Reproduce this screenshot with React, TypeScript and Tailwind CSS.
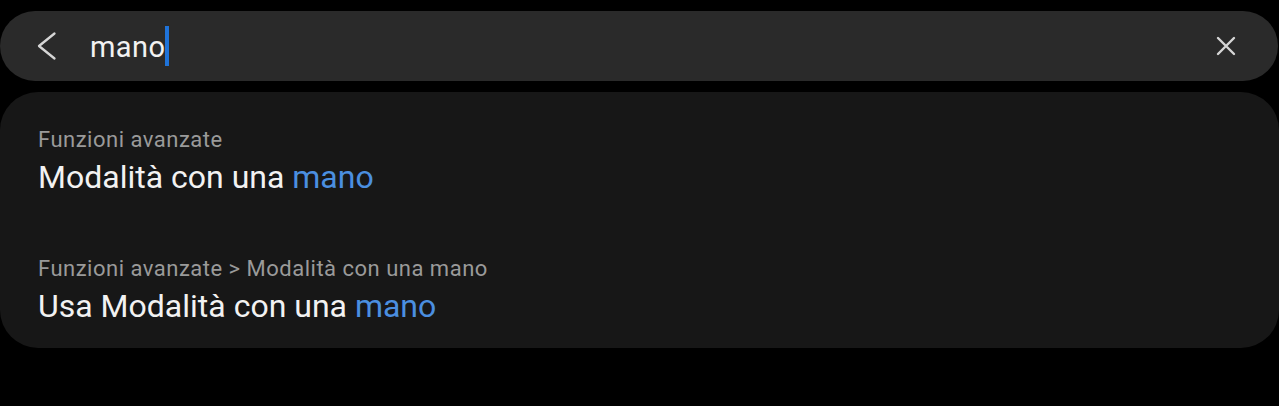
import React from "react";

export default function App() {
  return (
    <div
      className="w-[1279px] h-[406px] bg-black overflow-hidden"
      style={{ fontFamily: "Roboto, 'Noto Sans', sans-serif" }}
    >
      <div className="pt-[11px]">
        <div className="h-[70px] w-[1278px] rounded-full bg-[#2a2a2a] flex items-center">
          <div className="w-[90px] flex items-center pl-[37px]">
            <svg width="20" height="30" viewBox="0 0 20 30" fill="none">
              <path d="M17.5 2.5 L2 15 L17.5 27.5" stroke="#d6d6d6" strokeWidth="2.3" strokeLinecap="round" strokeLinejoin="round" />
            </svg>
          </div>
          <div className="flex items-center flex-1">
            <span className="text-[29px] text-[#f2f2f2] leading-none tracking-[0.4px] mt-[2px]">mano</span>
            <span className="w-[4px] h-[40px] bg-[#1f73d9]" />
          </div>
          <div className="pr-[42px] flex items-center">
            <svg width="20" height="20" viewBox="0 0 20 20" fill="none">
              <path d="M2 2 L18 18 M18 2 L2 18" stroke="#d6d6d6" strokeWidth="2.4" strokeLinecap="round" />
            </svg>
          </div>
        </div>
      </div>
      <div className="mt-[11px] h-[256px] w-[1279px] rounded-[38px] bg-[#171717] pl-[38px] pt-[35px] flex flex-col">
        <div className="h-[129px]">
          <div className="text-[22px] leading-[26px] tracking-[0.5px] text-[#9a9a9a]">Funzioni avanzate</div>
          <div className="text-[32px] leading-[38px] text-[#f2f2f2] mt-[5px]">
            Modalità con una <span className="text-[#4b8fe0]">mano</span>
          </div>
        </div>
        <div>
          <div className="text-[22px] leading-[26px] tracking-[0.5px] text-[#9a9a9a]">Funzioni avanzate &gt; Modalità con una mano</div>
          <div className="text-[32px] leading-[38px] text-[#f2f2f2] mt-[5px]">
            Usa Modalità con una <span className="text-[#4b8fe0]">mano</span>
          </div>
        </div>
      </div>
    </div>
  );
}
